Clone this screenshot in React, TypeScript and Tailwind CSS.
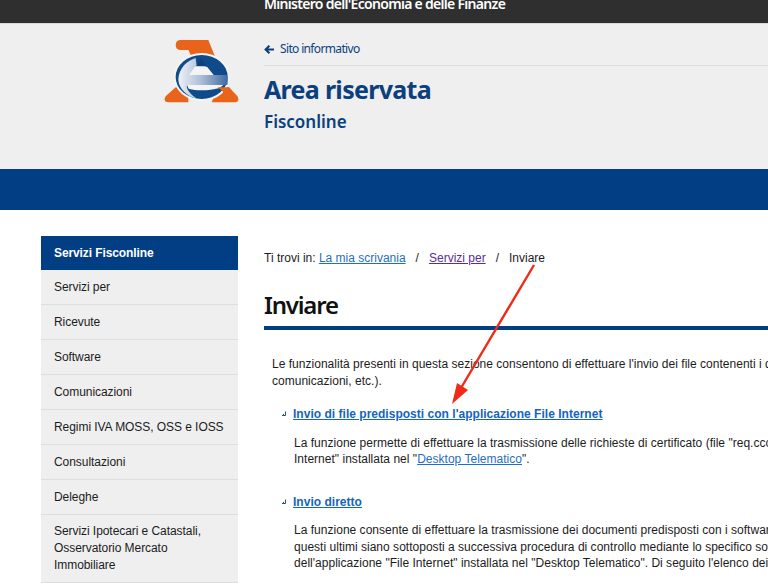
const sideItems = [
  "Servizi per",
  "Ricevute",
  "Software",
  "Comunicazioni",
  "Regimi IVA MOSS, OSS e IOSS",
  "Consultazioni",
  "Deleghe",
];

const Logo = () => (
  <svg viewBox="0 0 285 255" className="h-[85px] w-[95px]">
    <defs>
      <linearGradient id="swoosh" x1="0" x2="1" y1="0" y2="0">
        <stop offset="0" stopColor="#eef1f6" />
        <stop offset="0.45" stopColor="#aebfd8" />
        <stop offset="1" stopColor="#3f6aa3" />
      </linearGradient>
    </defs>
    <path d="M75 30H160L182 85H112L100 60H75C58 60 58 30 75 30Z" fill="#e8641b" />
    <path d="M62 172H100V217H40C26 217 26 202 36 195Z" fill="#e8641b" />
    <path d="M188 172H222L246 197C254 207 250 217 238 217H170Z" fill="#e8641b" />
    <ellipse cx="140" cy="141" rx="84" ry="72" fill="#f4f4f4" />
    <ellipse cx="140" cy="141" rx="78" ry="66" fill="#0f4a8a" />
    <path d="M122 84C95 92 72 115 70 148C70 175 95 200 128 207C108 195 92 178 96 165H217C219 155 219 145 216 135H175L150 108H125Z" fill="url(#swoosh)" />
    <path d="M138 84L124 108H152Z" fill="#123f7c" />
    <path d="M102 135L120 110H156L176 135Z" fill="#f4f4f4" />
    <path d="M96 165H205L194 174C160 183 125 183 101 176Z" fill="#f4f4f4" />
    <path d="M188 172H222L230 181L205 186Z" fill="#e8641b" />
  </svg>
);

const BulletMark = () => (
  <svg viewBox="0 0 6 6" className="mr-[6px] h-[6px] w-[6px] shrink-0">
    <path d="M4.5 0.5V4.5M1 4.5H4.5M2.5 3V4" stroke="#33507a" strokeWidth="1" fill="none" />
  </svg>
);

export default function App() {
  return (
    <div className="relative h-[584px] w-[768px] overflow-hidden bg-white font-['Liberation_Sans',Arial,sans-serif] text-[12px] text-[#1c1c1c]">
      {/* Top bar */}
      <div className="h-[24px] overflow-hidden border-b border-[#d8d8d8] bg-[#2f2f2f] pl-[264px]">
        <p className="mt-[-6px] font-['Noto_Sans',sans-serif] text-[14px] leading-[20px] font-semibold tracking-[-0.7px] whitespace-nowrap text-white">
          Ministero dell'Economia e delle Finanze
        </p>
      </div>

      {/* Header */}
      <header className="flex h-[145px] bg-[#efefef] pl-[155px]">
        <div className="mt-[6px] w-[109px] shrink-0">
          <Logo />
        </div>
        <div className="flex-1 font-['Noto_Sans',sans-serif] text-[#0b3f7e]">
          <div className="flex h-[42px] items-center gap-[6px] border-b border-[#dcdcdc] pt-[9px] text-[12px]">
            <svg viewBox="0 0 12 12" className="h-[11px] w-[10px]">
              <path d="M6.5 1.5L2 6L6.5 10.5M2.5 6H12" stroke="#0b3f7e" strokeWidth="2.6" fill="none" />
            </svg>
            <span className="tracking-[-0.65px]">Sito informativo</span>
          </div>
          <h1 className="mt-[5px] text-[25px] leading-[36px] font-bold tracking-[-0.7px]">Area riservata</h1>
          <p className="mt-[3px] text-[17px] leading-[24px] font-semibold">Fisconline</p>
        </div>
      </header>

      {/* Blue band */}
      <div className="h-[41px] bg-[#023e84]" />

      <div className="flex pt-[26px] pl-[41px]">
        {/* Sidebar */}
        <aside className="w-[197px] shrink-0">
          <div className="flex h-[34px] items-center bg-[#023e84] pl-[13px] font-bold tracking-[-0.1px] text-white">Servizi Fisconline</div>
          {sideItems.map((item) => (
            <div key={item} className="flex h-[35px] items-center border-b border-[#dedede] bg-[#efefef] pl-[13px] tracking-[-0.06px]">
              {item}
            </div>
          ))}
          <div className="border-b border-[#dedede] bg-[#efefef] py-[8px] pl-[13px] leading-[17px] tracking-[-0.06px]">
            Servizi Ipotecari e Catastali,
            <br />
            Osservatorio Mercato
            <br />
            Immobiliare
          </div>
        </aside>

        {/* Main column */}
        <main className="ml-[26px] min-w-0 flex-1 overflow-hidden">
          <div className="flex h-[44px] items-center whitespace-pre">
            <span>Ti trovi in: </span>
            <a href="#" className="text-[#1f6fc4] underline">La mia scrivania</a>
            <span className="mx-[10px]">/</span>
            <a href="#" className="text-[#5a2d9c] underline">Servizi per</a>
            <span className="mx-[10px]">/</span>
            <span>Inviare</span>
          </div>
          <h2 className="mt-[7px] h-[35px] font-['Noto_Sans',sans-serif] text-[24px] leading-[35px] font-semibold tracking-[-1.2px] text-[#111]">
            Inviare
          </h2>
          <div className="mt-[4px] h-[4px] bg-[#023e84]" />

          <div className="pt-[26px] pl-[8px] leading-[16.5px] tracking-[0.02px] whitespace-nowrap">
            <p>Le funzionalità presenti in questa sezione consentono di effettuare l'invio dei file contenenti i dati</p>
            <p>comunicazioni, etc.).</p>

            <div className="mt-[17px] flex items-center pl-[9px] font-bold text-[#1464c0] underline">
              <BulletMark />
              <a href="#">Invio di file predisposti con l'applicazione File Internet</a>
            </div>
            <div className="mt-[12px] pl-[22px]">
              <p>La funzione permette di effettuare la trasmissione delle richieste di certificato (file "req.ccc"</p>
              <p>
                Internet" installata nel "<a href="#" className="text-[#1f6fc4] underline">Desktop Telematico</a>".
              </p>
            </div>

            <div className="mt-[26px] flex items-center pl-[9px] font-bold text-[#1464c0] underline">
              <BulletMark />
              <a href="#">Invio diretto</a>
            </div>
            <div className="mt-[12px] pl-[22px]">
              <p>La funzione consente di effettuare la trasmissione dei documenti predisposti con i software</p>
              <p>questi ultimi siano sottoposti a successiva procedura di controllo mediante lo specifico software</p>
              <p>dell'applicazione "File Internet" installata nel "Desktop Telematico". Di seguito l'elenco dei</p>
              <p className="mt-[9px] pl-[30px]">Dichiarazioni integrative Unico/Redditi Irpef e societarie e altri adempimenti</p>
            </div>
          </div>
        </main>
      </div>

      {/* Red annotation arrow */}
      <svg viewBox="0 0 768 584" className="pointer-events-none absolute inset-0 h-[584px] w-[768px]">
        <path d="M534 265L461 388" stroke="#ee2a18" strokeWidth="2.4" fill="none" />
        <path d="M452 404L457 383L468 390Z" fill="#ee2a18" />
      </svg>
    </div>
  );
}
